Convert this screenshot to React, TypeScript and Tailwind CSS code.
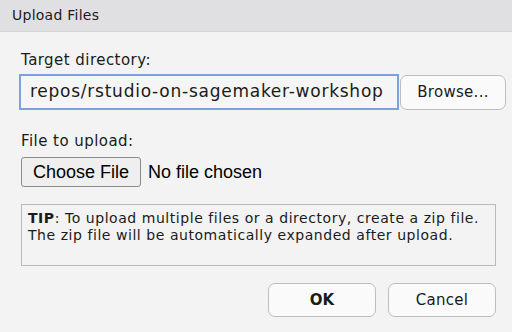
export default function App() {
  const ui = { fontFamily: '"DejaVu Sans", "Liberation Sans", sans-serif' }
  const native = { fontFamily: '"Liberation Sans", Arial, sans-serif' }

  return (
    <div className="w-[512px] h-[332px] bg-[#f2f3f2] text-[#1b1b1b] overflow-hidden" style={ui}>
      {/* Title bar */}
      <div className="h-[32px] bg-[#e0e0e3] border-b border-[#d3d3d6] flex items-center pl-[12px]">
        <span className="text-[14px] tracking-[0.25px]">Upload Files</span>
      </div>

      <div className="pl-[19px] pr-[6px]">
        {/* Target directory */}
        <div className="mt-[20px] ml-[2px] text-[15px] leading-[17px] tracking-[0.45px]">Target directory:</div>
        <div className="mt-[5px] flex items-center">
          <div className="shrink-0 w-[380px] h-[36px] border-2 border-[#7da1da] bg-[#f4f5f4] flex items-center pl-[9px] text-[17px] tracking-[0.75px] whitespace-nowrap overflow-hidden">
            repos/rstudio-on-sagemaker-workshop
          </div>
          <button className="shrink-0 ml-[1px] w-[106px] h-[35px] rounded-[7px] border border-[#bdbdbd] bg-[#fafafa] text-[15px] tracking-[0.3px] flex items-center justify-center">
            Browse...
          </button>
        </div>

        {/* File to upload */}
        <div className="mt-[23px] ml-[2px] text-[15px] leading-[17px] tracking-[0.45px]">File to upload:</div>
        <div className="mt-[7px] ml-[2px] flex items-center" style={native}>
          <button className="w-[120px] h-[30px] rounded-[3px] border border-[#8b8b8b] bg-[#efefef] text-[18px] text-black flex items-center justify-center">
            Choose File
          </button>
          <span className="ml-[7px] text-[18px] text-black">No file chosen</span>
        </div>

        {/* Tip */}
        <div className="mt-[17px] ml-[2px] w-[475px] h-[62px] border border-[#b9b9b9] pl-[6px] pt-[5px] text-[14px] leading-[17px] tracking-[0.55px]">
          <div><span className="font-bold">TIP</span>: To upload multiple files or a directory, create a zip file.</div>
          <div>The zip file will be automatically expanded after upload.</div>
        </div>

        {/* Actions */}
        <div className="mt-[17px] w-[477px] flex justify-end gap-[12px]">
          <button className="w-[108px] h-[34px] rounded-[7px] border border-[#bdbdbd] bg-[#fafafa] text-[15px] font-bold flex items-center justify-center">
            OK
          </button>
          <button className="w-[108px] h-[34px] rounded-[7px] border border-[#bdbdbd] bg-[#fafafa] text-[15px] tracking-[0.3px] flex items-center justify-center">
            Cancel
          </button>
        </div>
      </div>
    </div>
  )
}
